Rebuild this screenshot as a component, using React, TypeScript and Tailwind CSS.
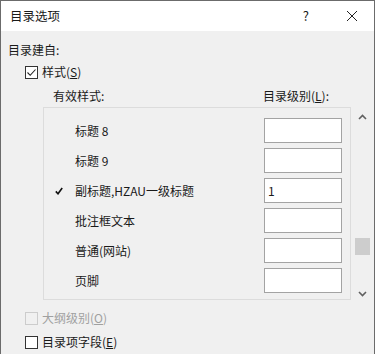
import React from "react";

const font = { fontFamily: '"Microsoft YaHei", "Noto Sans CJK SC", "Noto Sans", sans-serif' };

const rows = [
  { name: "标题 8", level: "", checked: false },
  { name: "标题 9", level: "", checked: false },
  { name: "副标题,HZAU一级标题", level: "1", checked: true },
  { name: "批注框文本", level: "", checked: false },
  { name: "普通(网站)", level: "", checked: false },
  { name: "页脚", level: "", checked: false },
];

const CheckBox = ({ checked, disabled }: { checked?: boolean; disabled?: boolean }) => (
  <span
    className={`flex h-[13px] w-[13px] items-center justify-center border ${
      disabled ? "border-[#cccccc] bg-[#f0f0f0]" : "border-[#333333] bg-white"
    }`}
  >
    {checked && (
      <svg width="11" height="11" viewBox="0 0 11 11" fill="none">
        <path d="M1.5 5.5 L4.2 8.3 L9.5 2.5" stroke="#222" strokeWidth="1.1" />
      </svg>
    )}
  </span>
);

export default function App() {
  return (
    <div
      className="flex h-[354px] w-[375px] flex-col overflow-hidden border-l border-r border-t border-[#6b6b6b] bg-[#f0f0f0] text-[12px] text-[#1a1a1a]"
      style={font}
    >
      {/* Title bar */}
      <div className="flex h-[30px] shrink-0 items-center bg-white pl-[9px]">
        <span className="text-[12.5px]">目录选项</span>
        <span className="ml-auto mr-[37px] text-[13px]">?</span>
        <svg width="12" height="12" viewBox="0 0 12 12" className="mr-[16px]">
          <path d="M1 1 L11 11 M11 1 L1 11" stroke="#222" strokeWidth="1" />
        </svg>
      </div>

      <div className="flex flex-col pl-[7px]">
        <div className="mt-[11px] h-[16px] leading-[16px]">目录建自:</div>

        <div className="mt-[6px] flex h-[16px] items-center gap-[4px] pl-[17px]">
          <CheckBox checked />
          <span className="leading-[16px]">
            样式(<span className="underline">S</span>)
          </span>
        </div>

        <div className="mt-[8px] flex h-[16px] items-center leading-[16px]">
          <span className="ml-[45px]">有效样式:</span>
          <span className="ml-auto mr-[45px]">
            目录级别(<span className="underline">L</span>):
          </span>
        </div>

        {/* List + scrollbar */}
        <div className="mt-[3px] flex">
          <div className="ml-[35px] flex h-[193px] w-[308px] flex-col gap-[5px] border border-[#dcdcdc] pt-[10px]">
            {rows.map((r) => (
              <div key={r.name} className="flex h-[25px] shrink-0 items-center">
                <span className="flex w-[31px] justify-end pr-[12px]">
                  {r.checked && (
                    <svg width="8" height="8" viewBox="0 0 8 8">
                      <path d="M0.8 4.4 L3 6.8 L7.2 1" stroke="#111" strokeWidth="1.6" fill="none" />
                    </svg>
                  )}
                </span>
                <span className="leading-[16px]">{r.name}</span>
                <div className="ml-auto mr-[8px] flex h-[25px] w-[78px] items-center border border-[#a3a3a3] bg-white pl-[3px] leading-[16px]">
                  {r.level}
                </div>
              </div>
            ))}
          </div>
          <div className="flex h-[193px] w-[22px] flex-col items-center pt-[7px]">
            <svg width="9" height="6" viewBox="0 0 9 6">
              <path d="M1 5 L4.5 1.5 L8 5" stroke="#606060" strokeWidth="1.6" fill="none" />
            </svg>
            <div className="mt-[118px] h-[17px] w-[15px] bg-[#cdcdcd]" />
            <svg width="9" height="6" viewBox="0 0 9 6" className="mt-[36px]">
              <path d="M1 1 L4.5 4.5 L8 1" stroke="#606060" strokeWidth="1.6" fill="none" />
            </svg>
          </div>
        </div>

        <div className="mt-[10px] flex h-[16px] items-center gap-[4px] pl-[17px] text-[#a0a0a0]">
          <CheckBox disabled />
          <span className="leading-[16px]">
            大纲级别(<span className="underline">O</span>)
          </span>
        </div>

        <div className="mt-[8px] flex h-[16px] items-center gap-[4px] pl-[17px]">
          <CheckBox />
          <span className="leading-[16px]">
            目录项字段(<span className="underline">E</span>)
          </span>
        </div>
      </div>
    </div>
  );
}
